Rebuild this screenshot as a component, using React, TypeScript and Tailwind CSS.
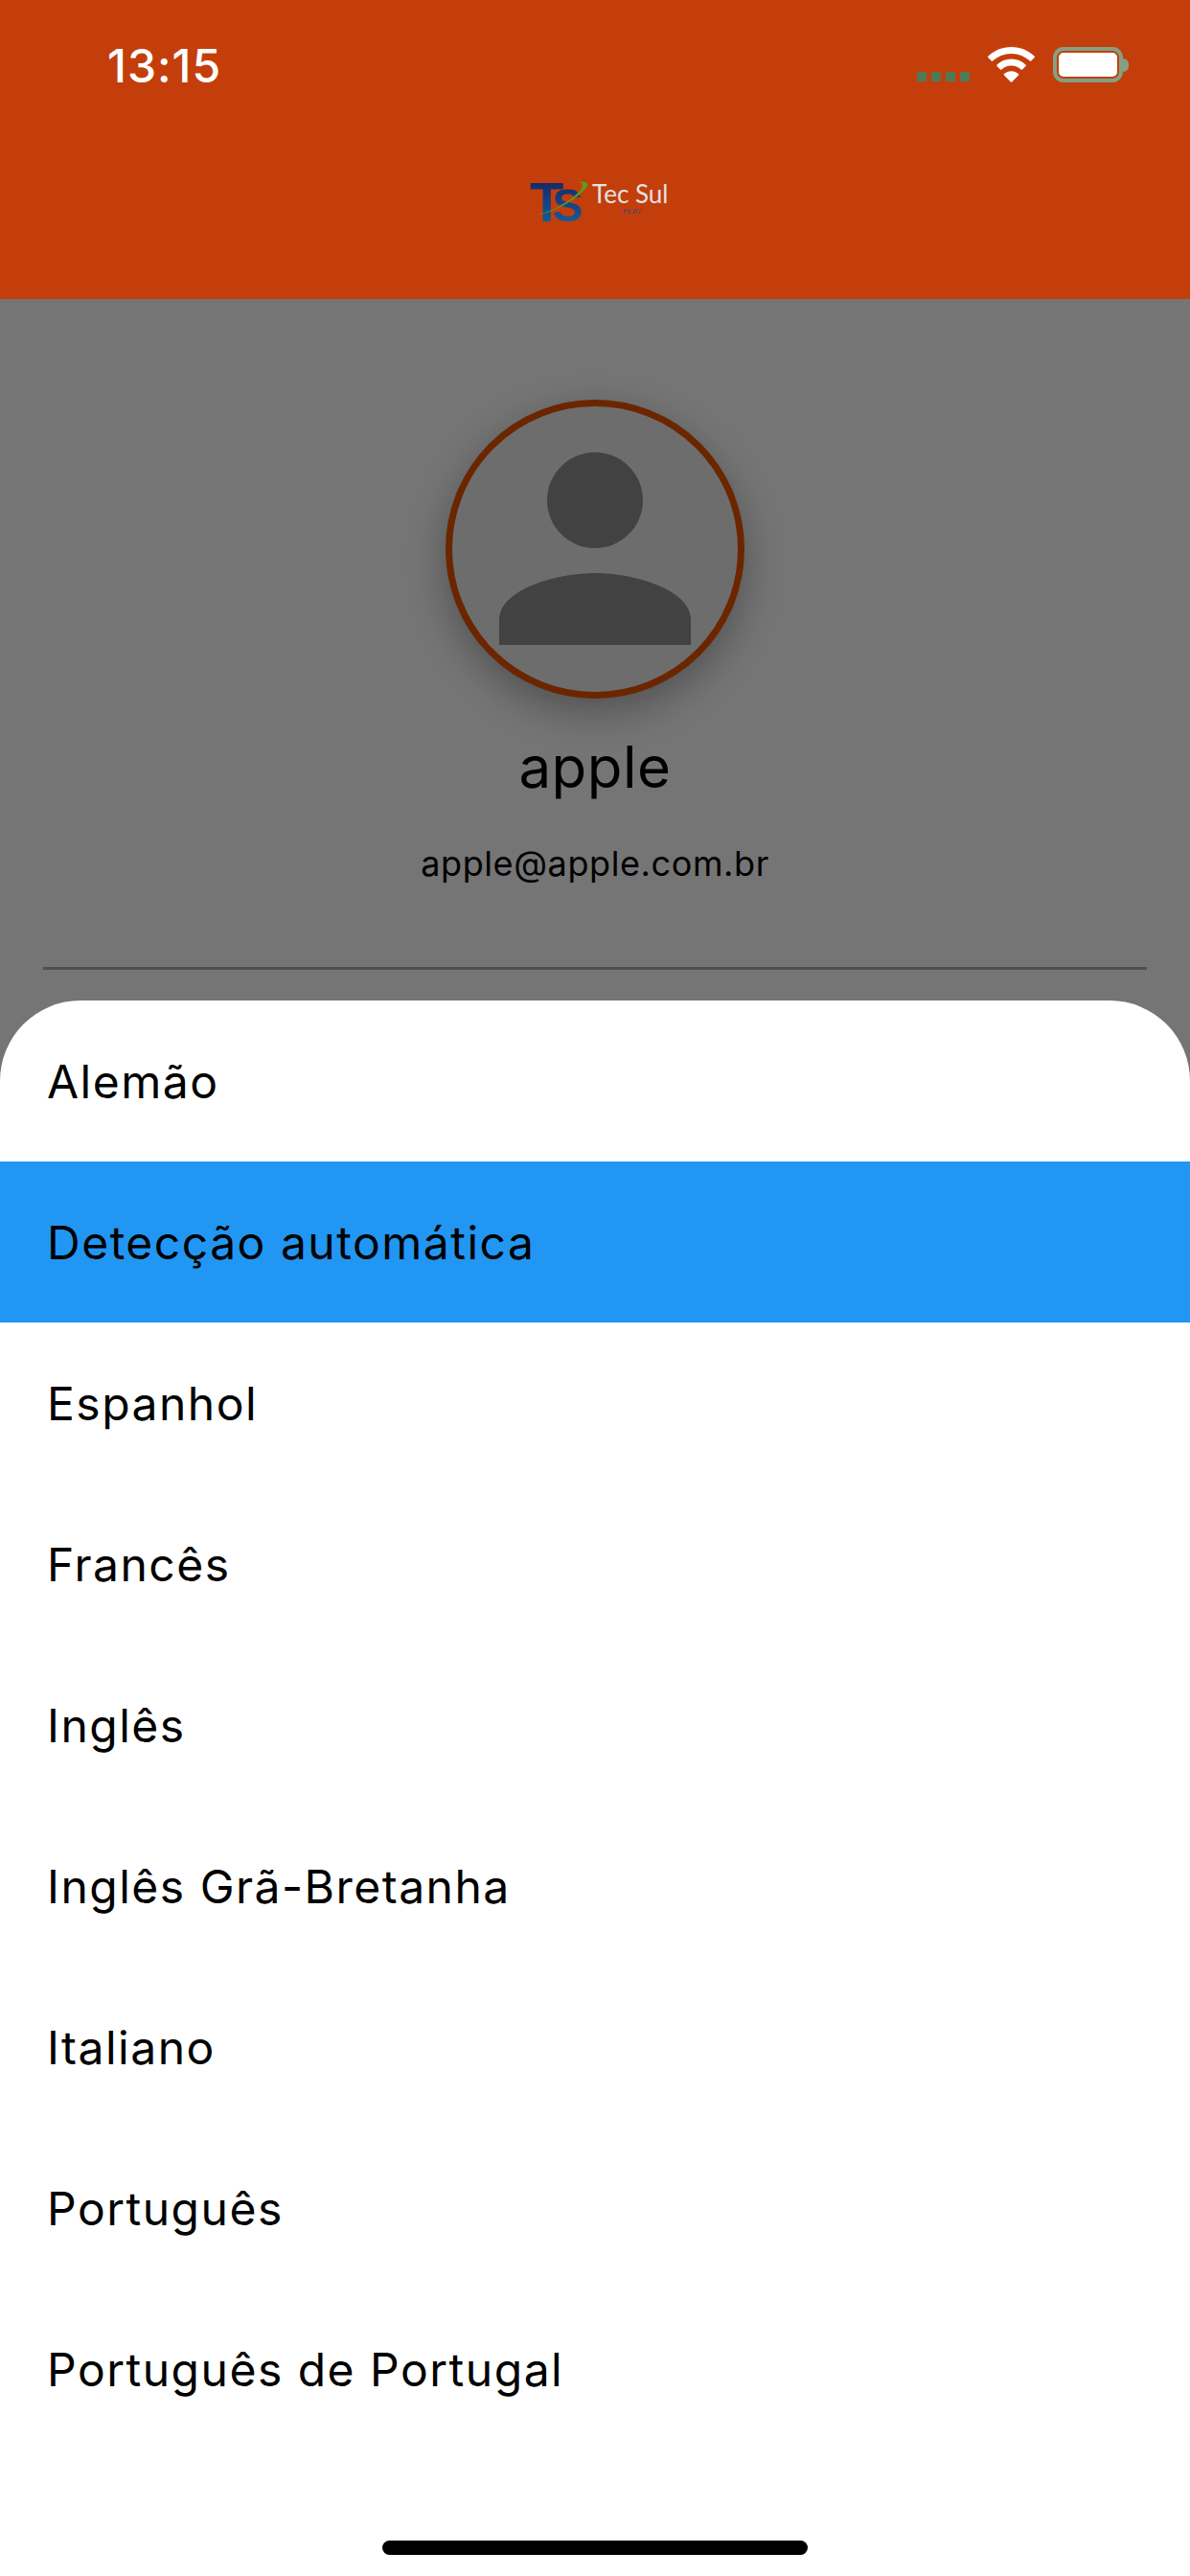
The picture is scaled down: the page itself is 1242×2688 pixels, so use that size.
const LANGUAGES = [
  { label: "Alemão" },
  { label: "Detecção automática", selected: true },
  { label: "Espanhol" },
  { label: "Francês" },
  { label: "Inglês" },
  { label: "Inglês Grã-Bretanha" },
  { label: "Italiano" },
  { label: "Português" },
  { label: "Português de Portugal" },
];

function WifiIcon() {
  return (
    <svg width="49" height="37" viewBox="0 0 49 37" fill="#ffffff">
      <path d="M24.5 0C15 0 6.6 3.7 0.3 9.7a1 1 0 0 0 0 1.4l3.4 3.5a1 1 0 0 0 1.4 0C10.2 9.8 17 6.9 24.5 6.9s14.3 2.9 19.4 7.7a1 1 0 0 0 1.4 0l3.4-3.5a1 1 0 0 0 0-1.4C42.4 3.7 34 0 24.5 0z" />
      <path d="M24.5 12.6c-5.8 0-11 2.2-15 5.9a1 1 0 0 0 0 1.4l3.5 3.5a1 1 0 0 0 1.4 0c2.7-2.4 6.2-3.9 10.1-3.9s7.4 1.5 10.1 3.9a1 1 0 0 0 1.4 0l3.5-3.5a1 1 0 0 0 0-1.4c-4-3.7-9.2-5.9-15-5.9z" />
      <path d="M24.5 25.2c-2.9 0-5.5 1.1-7.5 2.9a1 1 0 0 0 0 1.4l6.8 7a1 1 0 0 0 1.4 0l6.8-7a1 1 0 0 0 0-1.4c-2-1.8-4.6-2.9-7.5-2.9z" />
    </svg>
  );
}

function Battery() {
  return (
    <div className="flex items-center">
      <div className="w-[73px] h-[37px] rounded-[11px] border-4 border-[#84a184] p-[2px]">
        <div className="w-full h-full rounded-[5px] bg-white" />
      </div>
      <div className="w-[6px] h-[14px] rounded-r-full bg-[#84a184]" />
    </div>
  );
}

function StatusBar() {
  return (
    <div className="h-[134px] flex items-start justify-between pl-[112px] pr-[64px]">
      <span className="mt-[40px] text-[48px] leading-[58px] font-medium tracking-[1px] text-white font-['Inter',sans-serif]">
        13:15
      </span>
      <div className="flex items-start mt-[49px]">
        <div className="flex gap-[5px] mt-[26px] mr-[19px]">
          <div className="w-[10px] h-[10px] rounded-[1px] bg-[#4f7a55]" />
          <div className="w-[10px] h-[10px] rounded-[1px] bg-[#4f7a55]" />
          <div className="w-[10px] h-[10px] rounded-[1px] bg-[#4f7a55]" />
          <div className="w-[10px] h-[10px] rounded-[1px] bg-[#4f7a55]" />
        </div>
        <WifiIcon />
        <div className="ml-[19px]">
          <Battery />
        </div>
      </div>
    </div>
  );
}

function Logo() {
  return (
    <div className="relative w-[146px] h-[50px] font-['Liberation_Sans',sans-serif]">
      <span className="absolute left-0 top-[-3px] text-[58px] leading-[58px] font-bold whitespace-nowrap bg-linear-to-b from-[#14205e] to-[#0f6aa8] bg-clip-text text-transparent">
        T<span className="text-[48px] ml-[-12px]">S</span>
      </span>
      <svg className="absolute left-0 top-0" width="70" height="50" viewBox="0 0 70 50" fill="none">
        <path d="M4 40C22 38 50 24 60 9C62 6 58 4 50 5C58 6 56 12 46 20C34 30 16 38 4 40z" fill="#5f9a1f" />
      </svg>
      <span className="absolute left-[65px] top-[2px] text-[26px] leading-[30px] text-[#e2e2e2] whitespace-nowrap font-['Lato',sans-serif]">
        Tec Sul
      </span>
      <span className="absolute left-[97px] top-[31px] text-[8px] leading-[10px] text-[#3c4a7a]">PLAY</span>
    </div>
  );
}

function PersonIcon() {
  return (
    <svg width="200" height="201" viewBox="0 0 200 201" fill="#424242">
      <circle cx="100" cy="50" r="50" />
      <path d="M0 201V175C0 142 62 126 100 126C138 126 200 142 200 175V201z" />
    </svg>
  );
}

function Profile() {
  return (
    <div className="h-[820px] bg-[#757575] flex flex-col items-center pt-[105px] px-[45px]">
      <div className="w-[312px] h-[312px] shrink-0 rounded-full border-[7px] border-[#6b2600] bg-[#6d6d6d] flex justify-center pt-[48px] shadow-[0_14px_40px_rgba(0,0,0,0.3)]">
        <PersonIcon />
      </div>
      <p className="mt-[35px] text-[60px] leading-[72px] text-black tracking-[0.5px]">apple</p>
      <p className="mt-[43px] text-[36px] leading-[44px] text-black tracking-[0.6px]">apple@apple.com.br</p>
      <div className="w-full h-[3px] mt-[86px] bg-[#4f4f4f]" />
    </div>
  );
}

function LanguageSheet() {
  return (
    <div className="absolute left-0 right-0 bottom-0 top-[1044px] bg-white rounded-t-[84px] overflow-hidden">
      {LANGUAGES.map((lang) => (
        <div
          key={lang.label}
          className={`h-[168px] flex items-center pl-[49px] pt-[2px] text-[48px] tracking-[1.5px] text-black ${
            lang.selected ? "bg-[#2196f3]" : ""
          }`}
        >
          {lang.label}
        </div>
      ))}
      <div className="absolute left-[399px] bottom-[22px] w-[444px] h-[15px] rounded-full bg-black" />
    </div>
  );
}

export default function App() {
  return (
    <div className="relative w-[1242px] h-[2688px] overflow-hidden bg-white font-['Inter','Liberation_Sans',sans-serif]">
      <header className="h-[312px] bg-[#c43e0c]">
        <StatusBar />
        <div className="flex justify-center pt-[51px] pl-[10px]">
          <Logo />
        </div>
      </header>
      <Profile />
      <LanguageSheet />
    </div>
  );
}
